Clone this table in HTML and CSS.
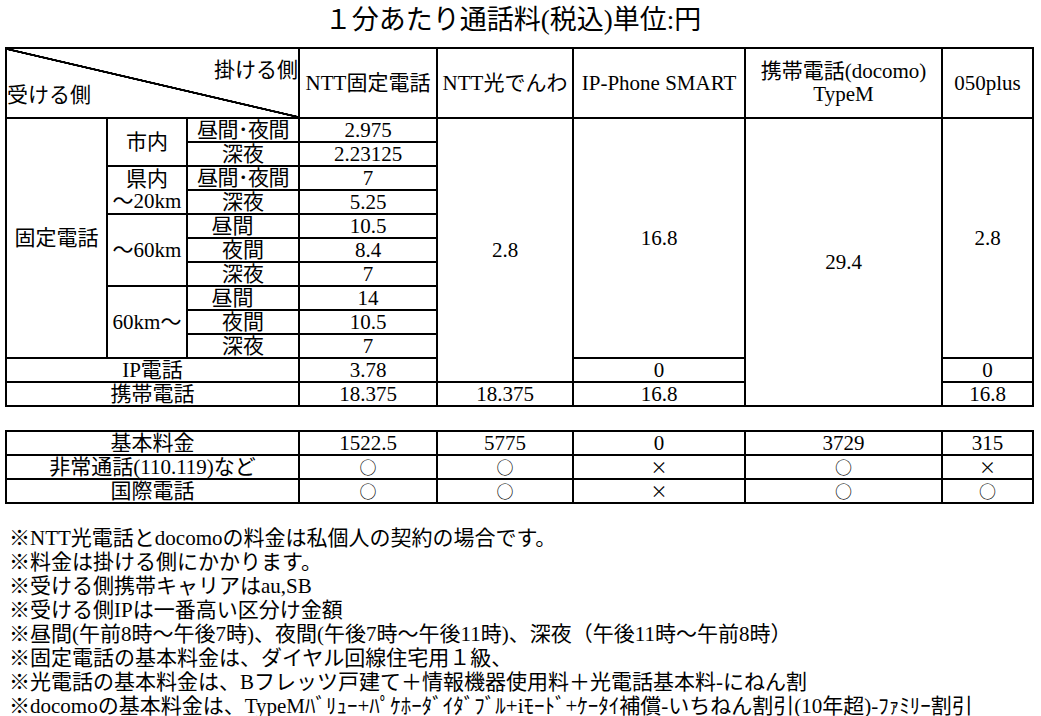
FILE: index.html
```html
<!DOCTYPE html>
<html lang="ja">
<head>
<meta charset="utf-8">
<title>1分あたり通話料</title>
<link rel="stylesheet" href="styles.css">
</head>
<body>
<div class="page">
  <h1 class="title">１分あたり通話料(税込)単位:円</h1>
  <table class="grid rates">
    <colgroup>
      <col class="c1"><col class="c2"><col class="c3"><col class="c4"><col class="c5"><col class="c6"><col class="c7"><col class="c8">
    </colgroup>
    <tr class="head">
      <th colspan="3" class="diag"><div class="kake">掛ける側</div><div class="uke">受ける側</div></th>
      <th>NTT固定電話</th>
      <th>NTT光でんわ</th>
      <th>IP-Phone SMART</th>
      <th>携帯電話(docomo)<br>TypeM</th>
      <th>050plus</th>
    </tr>
    <tr><td rowspan="10">固定電話</td><td rowspan="2">市内</td><td class="tight">昼間･夜間</td><td>2.975</td><td rowspan="11">2.8</td><td rowspan="10">16.8</td><td rowspan="12">29.4</td><td rowspan="10">2.8</td></tr>
    <tr><td>深夜</td><td>2.23125</td></tr>
    <tr><td rowspan="2">県内<br>～20km</td><td class="tight">昼間･夜間</td><td>7</td></tr>
    <tr><td>深夜</td><td>5.25</td></tr>
    <tr><td rowspan="3">～60km</td><td class="lft">昼間</td><td>10.5</td></tr>
    <tr><td>夜間</td><td>8.4</td></tr>
    <tr><td>深夜</td><td>7</td></tr>
    <tr><td rowspan="3">60km～</td><td class="lft">昼間</td><td>14</td></tr>
    <tr><td>夜間</td><td>10.5</td></tr>
    <tr><td>深夜</td><td>7</td></tr>
    <tr><td colspan="3">IP電話</td><td>3.78</td><td>0</td><td>0</td></tr>
    <tr><td colspan="3">携帯電話</td><td>18.375</td><td>18.375</td><td>16.8</td><td>16.8</td></tr>
  </table>
  <table class="grid basics">
    <colgroup>
      <col class="c1"><col class="c2"><col class="c3"><col class="c4"><col class="c5"><col class="c6"><col class="c7"><col class="c8">
    </colgroup>
    <tr><td colspan="3">基本料金</td><td>1522.5</td><td>5775</td><td>0</td><td>3729</td><td>315</td></tr>
    <tr><td colspan="3">非常通話(110.119)など</td><td class="mark">○</td><td class="mark">○</td><td class="mark">×</td><td class="mark">○</td><td class="mark">×</td></tr>
    <tr><td colspan="3">国際電話</td><td class="mark">○</td><td class="mark">○</td><td class="mark">×</td><td class="mark">○</td><td class="mark">○</td></tr>
  </table>
  <ul class="notes">
    <li>※NTT光電話とdocomoの料金は私個人の契約の場合です。</li>
    <li>※料金は掛ける側にかかります。</li>
    <li>※受ける側携帯キャリアはau,SB</li>
    <li>※受ける側IPは一番高い区分け金額</li>
    <li>※昼間(午前8時～午後7時)、夜間(午後7時～午後11時)、深夜（午後11時～午前8時）</li>
    <li>※固定電話の基本料金は、ダイヤル回線住宅用１級、</li>
    <li>※光電話の基本料金は、Bフレッツ戸建て＋情報機器使用料＋光電話基本料-にねん割</li>
    <li>※docomoの基本料金は、TypeMﾊﾞﾘｭｰ+ﾊﾟｹﾎｰﾀﾞｲﾀﾞﾌﾞﾙ+iﾓｰﾄﾞ+ｹｰﾀｲ補償-いちねん割引(10年超)-ﾌｧﾐﾘｰ割引</li>
  </ul>
</div>
</body>
</html>
```
FILE: styles.css
```css
body {
  margin: 0;
  background: #fff;
  color: #000;
  font-family: "Liberation Serif", "Noto Sans CJK JP", serif;
}

.page {
  width: 1030px;
  padding: 4px 0 0 5px;
}

.title {
  margin: 0 0 11px;
  padding-right: 14px;
  font-size: 27px;
  line-height: 32px;
  font-weight: normal;
  text-align: center;
}

.grid {
  border-collapse: collapse;
  table-layout: fixed;
  width: 1028px;
}

.c1 { width: 101px; }
.c2 { width: 80px; }
.c3 { width: 112px; }
.c4 { width: 138px; }
.c5 { width: 136px; }
.c6 { width: 172px; }
.c7 { width: 197px; }
.c8 { width: 91px; }

.grid td,
.grid th {
  border: 2px solid #000;
  padding: 0;
  text-align: center;
  vertical-align: middle;
  font-size: 21px;
  line-height: 22px;
  font-weight: normal;
  white-space: nowrap;
}

.grid tr {
  height: 24px;
}

.grid .head {
  height: 70px;
}

.head th {
  line-height: 23px;
}

.diag {
  padding: 0 10px 0 4px;
  background: linear-gradient(to top right,
    transparent calc(50% - 1.3px),
    #000 calc(50% - 0.9px),
    #000 calc(50% + 0.9px),
    transparent calc(50% + 1.3px));
}

.kake {
  text-align: right;
  line-height: 25px;
}

.uke {
  text-align: left;
  line-height: 25px;
}

.lft {
  padding-right: 21px !important;
}

.tight {
  letter-spacing: -0.5px;
}

.grid .mark {
  font-family: "Noto Sans CJK JP", sans-serif;
  font-size: 17px;
  line-height: 20px;
}

.rates {
  margin-bottom: 23px;
}

.notes {
  margin: 22px 0 0;
  padding: 0 0 0 4px;
  list-style: none;
  font-size: 21px;
  line-height: 24px;
  white-space: nowrap;
}
```
